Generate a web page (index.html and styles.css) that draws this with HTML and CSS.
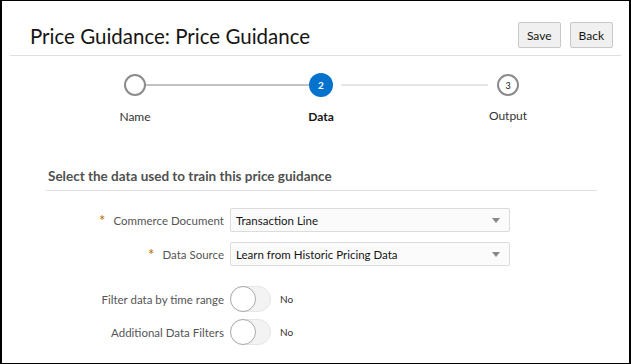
FILE: index.html
```html
<!DOCTYPE html>
<html>
<head>
<meta charset="utf-8">
<link rel="stylesheet" href="styles.css">
</head>
<body>
<div class="frame">
  <header class="header">
    <h1 class="title">Price Guidance: Price Guidance</h1>
    <div class="actions">
      <button class="btn">Save</button>
      <button class="btn">Back</button>
    </div>
  </header>

  <div class="train">
    <div class="dot dot-empty"></div>
    <div class="bar bar-done"></div>
    <div class="dot dot-active">2</div>
    <div></div>
    <div class="bar bar-todo"></div>
    <div></div>
    <div class="dot dot-num">3</div>

    <div class="step-label c1">Name</div>
    <div class="step-label step-label-active c3">Data</div>
    <div class="step-label c7">Output</div>
  </div>

  <section class="section">
    <h2 class="section-title">Select the data used to train this price guidance</h2>
    <div class="form">
      <div class="row">
        <label class="label"><span class="req">*</span>Commerce Document</label>
        <div class="select"><span>Transaction Line</span><span class="arrow"></span></div>
      </div>
      <div class="row row-2">
        <label class="label"><span class="req">*</span>Data Source</label>
        <div class="select"><span>Learn from Historic Pricing Data</span><span class="arrow"></span></div>
      </div>
      <div class="row row-3">
        <label class="label">Filter data by time range</label>
        <div class="switch"><span class="knob"></span></div>
        <span class="switch-text">No</span>
      </div>
      <div class="row row-4">
        <label class="label">Additional Data Filters</label>
        <div class="switch"><span class="knob"></span></div>
        <span class="switch-text">No</span>
      </div>
    </div>
  </section>
</div>
</body>
</html>
```

FILE: styles.css
```css
* { box-sizing: border-box; }
html, body { margin: 0; padding: 0; background: #fff; }
body {
  font-family: Lato, "Noto Sans", sans-serif;
  color: #161513;
}
.frame {
  width: 631px;
  height: 364px;
  border: 1px solid #000;
  border-left-width: 2px;
  border-right-width: 2px;
  overflow: hidden;
}
.header {
  display: flex;
  align-items: flex-start;
  justify-content: space-between;
  margin: 0 8px;
  padding: 21px 8px 0 20px;
  border-bottom: 1px solid #dfdfdf;
  height: 55px;
}
.title {
  margin: 0;
  font-size: 20.5px;
  font-weight: 400;
  color: #161513;
  line-height: 26px;
  padding-top: 1px;
}
.actions { display: flex; gap: 9px; }
.btn {
  font-family: inherit;
  font-size: 12px;
  color: #161513;
  background: #f0f0f0;
  border: 1px solid #c8c8c8;
  border-radius: 2px;
  height: 26px;
  padding: 0 8px;
}
.train {
  display: grid;
  grid-template-columns: 22px 163px 24px 8px 147px 9px 22px;
  grid-template-rows: 24px auto;
  row-gap: 12px;
  align-items: center;
  align-content: start;
  padding: 17px 0 0 122px;
  height: 112px;
}
.dot {
  width: 22px;
  height: 22px;
  border-radius: 50%;
  display: flex;
  align-items: center;
  justify-content: center;
  font-size: 9px;
}
.dot-empty, .dot-num {
  border: 2px solid #8c8c8c;
  background: #fff;
}
.dot-num { color: #161513; }
.dot-active {
  width: 24px;
  height: 24px;
  background: #0572ce;
  color: #fff;
  font-weight: 700;
  font-size: 10px;
}
.bar { height: 2px; }
.bar-done { background: #c2c2c2; }
.bar-todo { background: #e6e6e6; }
.step-label {
  grid-row: 2;
  display: flex;
  justify-content: center;
  white-space: nowrap;
  font-size: 12px;
  line-height: 16px;
  color: #333;
}
.c1 { grid-column: 1; }
.c3 { grid-column: 3; }
.c7 { grid-column: 7; margin-top: -3px; }
.step-label-active { font-weight: 700; color: #161513; }
.section {
  margin: 0 32px 0 44px;
}
.section-title {
  margin: 0;
  padding-left: 2px;
  font-size: 13.5px;
  line-height: 17px;
  font-weight: 700;
  color: #505050;
  padding-bottom: 5px;
  border-bottom: 1px solid #e0e0e0;
}
.form {
  padding-top: 17px;
  display: flex;
  flex-direction: column;
}
.row {
  display: flex;
  align-items: center;
}
.row-2 { margin-top: 10px; }
.row-3 { margin-top: 20px; }
.row-4 { margin-top: 7px; }
.label {
  width: 184px;
  text-align: right;
  padding-right: 6px;
  font-size: 11.5px;
  color: #555;
}
.req { color: #b56a00; margin-right: 8px; font-size: 15px; line-height: 10px; vertical-align: -1px; }
.select {
  width: 280px;
  height: 24px;
  border: 1px solid #dcdcdc;
  border-radius: 2px;
  background: #fbfbfb;
  display: flex;
  align-items: center;
  justify-content: space-between;
  padding: 0 9px 0 5px;
  font-size: 11.5px;
  color: #161513;
}
.arrow {
  width: 0; height: 0;
  border-left: 4px solid transparent;
  border-right: 4px solid transparent;
  border-top: 5px solid #888;
}
.switch {
  width: 41px;
  height: 26px;
  border-radius: 13px;
  background: #f3f3f3;
  border: 1px solid #e6e6e6;
  position: relative;
}
.knob {
  position: absolute;
  left: -1px; top: -1px;
  width: 26px;
  height: 26px;
  border-radius: 50%;
  background: #fff;
  border: 1px solid #a9a9a9;
}
.switch-text {
  margin-left: 9px;
  font-size: 10px;
  color: #333;
}
```
